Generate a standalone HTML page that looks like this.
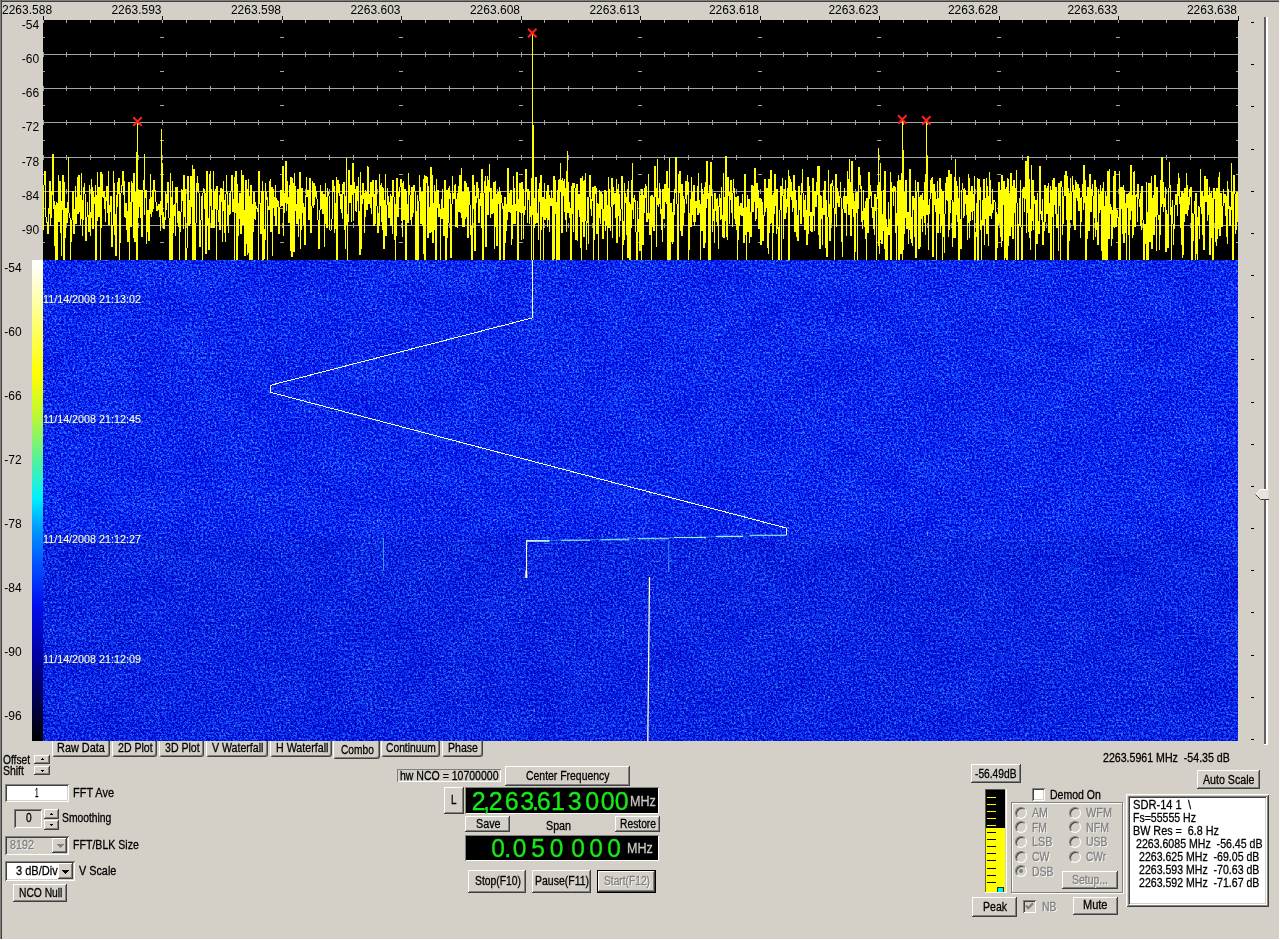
<!DOCTYPE html>
<html><head><meta charset="utf-8"><title>SpectraVue</title>
<style>
html,body{margin:0;padding:0}
body{width:1280px;height:940px;background:#d4d0c8;overflow:hidden;position:relative;font-family:"Liberation Sans",sans-serif;}
.t{position:absolute;white-space:pre;transform-origin:0 50%;display:block;-webkit-text-stroke:0.3px currentColor}
.btn{position:absolute;background:#d4d0c8;box-sizing:border-box;box-shadow:inset -1px -1px #404040,inset 1px 1px #fff,inset -2px -2px #808080,inset 2px 2px #d4d0c8}
.sunk{position:absolute;box-sizing:border-box;box-shadow:inset 1px 1px #808080,inset -1px -1px #fff,inset 2px 2px #404040,inset -2px -2px #d4d0c8}
.abs{position:absolute}
</style></head><body>
<div id="all" style="position:absolute;left:0;top:0;width:1280px;height:940px;will-change:transform">
<div class="abs" style="left:0;top:0;width:1280px;height:2px;background:#404040;border-top:1px solid #808080;box-sizing:border-box"></div>
<div class="abs" style="left:0;top:0;width:2px;height:940px;background:#404040;border-left:1px solid #808080;box-sizing:border-box"></div>
<div class="abs" style="left:0;top:939px;width:1280px;height:1px;background:#fff"></div>
<div class="abs" style="left:1279px;top:0;width:1px;height:940px;background:#fff"></div>
<style>
.tab{position:absolute;box-sizing:border-box;border-left:1px solid #fff;border-right:1px solid #404040;border-bottom:1px solid #404040;border-radius:0 0 3px 3px;box-shadow:inset -1px -1px #808080}
.sunk1{position:absolute;box-sizing:border-box;box-shadow:inset 1px 1px #808080,inset -1px -1px #fff}
.disp{position:absolute;box-sizing:border-box;box-shadow:inset 1px 1px #808080,inset -1px -1px #fff}
.ns{-webkit-text-stroke:0}
.dg{text-align:center;-webkit-text-stroke:0.35px currentColor}
.radio{width:12px;height:12px;border-radius:6px;box-sizing:border-box;background:#d4d0c8;border:1px solid;border-color:#808080 #fff #fff #808080;box-shadow:inset 1px 1px #404040}
</style>
<span class="t ns" style="left:2.00px;top:3.84px;font-size:12px;line-height:12px;color:#000;">2263.588</span>
<span class="t ns" style="left:111.45px;top:3.84px;font-size:12px;line-height:12px;color:#000;">2263.593</span>
<span class="t ns" style="left:230.95px;top:3.84px;font-size:12px;line-height:12px;color:#000;">2263.598</span>
<span class="t ns" style="left:350.45px;top:3.84px;font-size:12px;line-height:12px;color:#000;">2263.603</span>
<span class="t ns" style="left:469.95px;top:3.84px;font-size:12px;line-height:12px;color:#000;">2263.608</span>
<span class="t ns" style="left:589.45px;top:3.84px;font-size:12px;line-height:12px;color:#000;">2263.613</span>
<span class="t ns" style="left:708.95px;top:3.84px;font-size:12px;line-height:12px;color:#000;">2263.618</span>
<span class="t ns" style="left:828.45px;top:3.84px;font-size:12px;line-height:12px;color:#000;">2263.623</span>
<span class="t ns" style="left:947.95px;top:3.84px;font-size:12px;line-height:12px;color:#000;">2263.628</span>
<span class="t ns" style="left:1067.45px;top:3.84px;font-size:12px;line-height:12px;color:#000;">2263.633</span>
<span class="t ns" style="left:1186.95px;top:3.84px;font-size:12px;line-height:12px;color:#000;">2263.638</span>
<span class="t ns" style="left:21.86px;top:19.14px;font-size:12px;line-height:12px;color:#000;">-54</span>
<span class="t ns" style="left:21.86px;top:53.14px;font-size:12px;line-height:12px;color:#000;">-60</span>
<span class="t ns" style="left:21.86px;top:87.14px;font-size:12px;line-height:12px;color:#000;">-66</span>
<span class="t ns" style="left:21.86px;top:121.14px;font-size:12px;line-height:12px;color:#000;">-72</span>
<span class="t ns" style="left:21.86px;top:156.14px;font-size:12px;line-height:12px;color:#000;">-78</span>
<span class="t ns" style="left:21.86px;top:190.14px;font-size:12px;line-height:12px;color:#000;">-84</span>
<span class="t ns" style="left:21.86px;top:224.14px;font-size:12px;line-height:12px;color:#000;">-90</span>
<span class="t ns" style="left:4.30px;top:261.54px;font-size:12px;line-height:12px;color:#000;">-54</span>
<span class="t ns" style="left:4.30px;top:325.54px;font-size:12px;line-height:12px;color:#000;">-60</span>
<span class="t ns" style="left:4.30px;top:389.54px;font-size:12px;line-height:12px;color:#000;">-66</span>
<span class="t ns" style="left:4.30px;top:453.54px;font-size:12px;line-height:12px;color:#000;">-72</span>
<span class="t ns" style="left:4.30px;top:517.54px;font-size:12px;line-height:12px;color:#000;">-78</span>
<span class="t ns" style="left:4.30px;top:581.54px;font-size:12px;line-height:12px;color:#000;">-84</span>
<span class="t ns" style="left:4.30px;top:645.54px;font-size:12px;line-height:12px;color:#000;">-90</span>
<span class="t ns" style="left:4.30px;top:709.54px;font-size:12px;line-height:12px;color:#000;">-96</span>
<svg class="abs" style="left:0;top:0" width="1280" height="745" viewBox="0 0 1280 745" shape-rendering="crispEdges">
<defs>
<filter id="wf" x="0" y="0" width="100%" height="100%" color-interpolation-filters="sRGB">
<feTurbulence type="fractalNoise" baseFrequency="0.618 0.707" numOctaves="3" seed="7"/>
<feColorMatrix type="matrix" values="1 0 0 0 0  1 0 0 0 0  1 0 0 0 0  0 0 0 0 1" result="n1"/>
<feTurbulence type="fractalNoise" baseFrequency="0.437 0.389" numOctaves="2" seed="23"/>
<feColorMatrix type="matrix" values="1 0 0 0 0  1 0 0 0 0  1 0 0 0 0  0 0 0 0 1" result="n2"/>
<feComposite in="n1" in2="n2" operator="arithmetic" k1="0" k2="1.05" k3="0.8" k4="-0.445" result="n12"/>
<feTurbulence type="fractalNoise" baseFrequency="0.023 0.031" numOctaves="3" seed="5"/>
<feColorMatrix type="matrix" values="1 0 0 0 0  1 0 0 0 0  1 0 0 0 0  0 0 0 0 1" result="n3"/>
<feComposite in="n12" in2="n3" operator="arithmetic" k1="0" k2="1" k3="0.13" k4="-0.065" result="n"/>
<feComponentTransfer in="n">
<feFuncR type="table" tableValues="0 0 0 0 0.01 0.035 0.075 0.12 0.18 0.25 0.32"/>
<feFuncG type="table" tableValues="0 0 0 0.02 0.07 0.16 0.27 0.37 0.46 0.55 0.62"/>
<feFuncB type="table" tableValues="0.74 0.76 0.79 0.84 0.90 0.955 1 1 1 1 1"/>
</feComponentTransfer>
</filter>
<linearGradient id="cb" x1="0" y1="0" x2="0" y2="1">
<stop offset="0" stop-color="#ffffff"/>
<stop offset="0.03" stop-color="#ffffe8"/>
<stop offset="0.10" stop-color="#ffff98"/>
<stop offset="0.235" stop-color="#ffff00"/>
<stop offset="0.32" stop-color="#c0f830"/>
<stop offset="0.42" stop-color="#50f0a0"/>
<stop offset="0.495" stop-color="#00f0ff"/>
<stop offset="0.553" stop-color="#00a0ff"/>
<stop offset="0.634" stop-color="#0050ff"/>
<stop offset="0.715" stop-color="#0010f0"/>
<stop offset="0.823" stop-color="#0000a0"/>
<stop offset="0.931" stop-color="#000040"/>
<stop offset="1" stop-color="#000000"/>
</linearGradient>
<linearGradient id="dk" x1="0" y1="0" x2="0" y2="1">
<stop offset="0" stop-color="#000050" stop-opacity="0"/>
<stop offset="0.56" stop-color="#000050" stop-opacity="0"/>
<stop offset="0.59" stop-color="#000050" stop-opacity="0.08"/>
<stop offset="1" stop-color="#000050" stop-opacity="0.08"/>
</linearGradient>
</defs>
<rect x="43" y="16" width="1" height="5" fill="#000"/>
<rect x="162" y="16" width="1" height="5" fill="#000"/>
<rect x="282" y="16" width="1" height="5" fill="#000"/>
<rect x="401" y="16" width="1" height="5" fill="#000"/>
<rect x="521" y="16" width="1" height="5" fill="#000"/>
<rect x="640" y="16" width="1" height="5" fill="#000"/>
<rect x="760" y="16" width="1" height="5" fill="#000"/>
<rect x="879" y="16" width="1" height="5" fill="#000"/>
<rect x="999" y="16" width="1" height="5" fill="#000"/>
<rect x="1118" y="16" width="1" height="5" fill="#000"/>
<rect x="1238" y="16" width="1" height="5" fill="#000"/>
<rect x="43" y="20" width="1195" height="240" fill="#000"/>
<clipPath id="pc"><rect x="43" y="20" width="1195" height="240"/></clipPath>
<path clip-path="url(#pc)" d="M43 54.5H1238M43 88.5H1238M43 122.5H1238M43 157.5H1238M43 191.5H1238M43 225.5H1238M41 37.5h4M41 71.5h4M41 105.5h4M41 140.5h4M41 174.5h4M41 208.5h4M41 242.5h4M43.5 20v3M43.5 52v5M43.5 86v5M43.5 120v5M43.5 155v5M43.5 189v5M43.5 223v5M66.5 20v3M66.5 52v5M66.5 86v5M66.5 120v5M66.5 155v5M66.5 189v5M66.5 223v5M90.5 20v3M90.5 52v5M90.5 86v5M90.5 120v5M90.5 155v5M90.5 189v5M90.5 223v5M114.5 20v3M114.5 52v5M114.5 86v5M114.5 120v5M114.5 155v5M114.5 189v5M114.5 223v5M138.5 20v3M138.5 52v5M138.5 86v5M138.5 120v5M138.5 155v5M138.5 189v5M138.5 223v5M160 37.5h4M160 71.5h4M160 105.5h4M160 140.5h4M160 174.5h4M160 208.5h4M160 242.5h4M162.5 20v3M162.5 52v5M162.5 86v5M162.5 120v5M162.5 155v5M162.5 189v5M162.5 223v5M186.5 20v3M186.5 52v5M186.5 86v5M186.5 120v5M186.5 155v5M186.5 189v5M186.5 223v5M210.5 20v3M210.5 52v5M210.5 86v5M210.5 120v5M210.5 155v5M210.5 189v5M210.5 223v5M234.5 20v3M234.5 52v5M234.5 86v5M234.5 120v5M234.5 155v5M234.5 189v5M234.5 223v5M258.5 20v3M258.5 52v5M258.5 86v5M258.5 120v5M258.5 155v5M258.5 189v5M258.5 223v5M280 37.5h4M280 71.5h4M280 105.5h4M280 140.5h4M280 174.5h4M280 208.5h4M280 242.5h4M282.5 20v3M282.5 52v5M282.5 86v5M282.5 120v5M282.5 155v5M282.5 189v5M282.5 223v5M305.5 20v3M305.5 52v5M305.5 86v5M305.5 120v5M305.5 155v5M305.5 189v5M305.5 223v5M329.5 20v3M329.5 52v5M329.5 86v5M329.5 120v5M329.5 155v5M329.5 189v5M329.5 223v5M353.5 20v3M353.5 52v5M353.5 86v5M353.5 120v5M353.5 155v5M353.5 189v5M353.5 223v5M377.5 20v3M377.5 52v5M377.5 86v5M377.5 120v5M377.5 155v5M377.5 189v5M377.5 223v5M399 37.5h4M399 71.5h4M399 105.5h4M399 140.5h4M399 174.5h4M399 208.5h4M399 242.5h4M401.5 20v3M401.5 52v5M401.5 86v5M401.5 120v5M401.5 155v5M401.5 189v5M401.5 223v5M425.5 20v3M425.5 52v5M425.5 86v5M425.5 120v5M425.5 155v5M425.5 189v5M425.5 223v5M449.5 20v3M449.5 52v5M449.5 86v5M449.5 120v5M449.5 155v5M449.5 189v5M449.5 223v5M473.5 20v3M473.5 52v5M473.5 86v5M473.5 120v5M473.5 155v5M473.5 189v5M473.5 223v5M497.5 20v3M497.5 52v5M497.5 86v5M497.5 120v5M497.5 155v5M497.5 189v5M497.5 223v5M519 37.5h4M519 71.5h4M519 105.5h4M519 140.5h4M519 174.5h4M519 208.5h4M519 242.5h4M521.5 20v3M521.5 52v5M521.5 86v5M521.5 120v5M521.5 155v5M521.5 189v5M521.5 223v5M544.5 20v3M544.5 52v5M544.5 86v5M544.5 120v5M544.5 155v5M544.5 189v5M544.5 223v5M568.5 20v3M568.5 52v5M568.5 86v5M568.5 120v5M568.5 155v5M568.5 189v5M568.5 223v5M592.5 20v3M592.5 52v5M592.5 86v5M592.5 120v5M592.5 155v5M592.5 189v5M592.5 223v5M616.5 20v3M616.5 52v5M616.5 86v5M616.5 120v5M616.5 155v5M616.5 189v5M616.5 223v5M638 37.5h4M638 71.5h4M638 105.5h4M638 140.5h4M638 174.5h4M638 208.5h4M638 242.5h4M640.5 20v3M640.5 52v5M640.5 86v5M640.5 120v5M640.5 155v5M640.5 189v5M640.5 223v5M664.5 20v3M664.5 52v5M664.5 86v5M664.5 120v5M664.5 155v5M664.5 189v5M664.5 223v5M688.5 20v3M688.5 52v5M688.5 86v5M688.5 120v5M688.5 155v5M688.5 189v5M688.5 223v5M712.5 20v3M712.5 52v5M712.5 86v5M712.5 120v5M712.5 155v5M712.5 189v5M712.5 223v5M736.5 20v3M736.5 52v5M736.5 86v5M736.5 120v5M736.5 155v5M736.5 189v5M736.5 223v5M758 37.5h4M758 71.5h4M758 105.5h4M758 140.5h4M758 174.5h4M758 208.5h4M758 242.5h4M760.5 20v3M760.5 52v5M760.5 86v5M760.5 120v5M760.5 155v5M760.5 189v5M760.5 223v5M783.5 20v3M783.5 52v5M783.5 86v5M783.5 120v5M783.5 155v5M783.5 189v5M783.5 223v5M807.5 20v3M807.5 52v5M807.5 86v5M807.5 120v5M807.5 155v5M807.5 189v5M807.5 223v5M831.5 20v3M831.5 52v5M831.5 86v5M831.5 120v5M831.5 155v5M831.5 189v5M831.5 223v5M855.5 20v3M855.5 52v5M855.5 86v5M855.5 120v5M855.5 155v5M855.5 189v5M855.5 223v5M877 37.5h4M877 71.5h4M877 105.5h4M877 140.5h4M877 174.5h4M877 208.5h4M877 242.5h4M879.5 20v3M879.5 52v5M879.5 86v5M879.5 120v5M879.5 155v5M879.5 189v5M879.5 223v5M903.5 20v3M903.5 52v5M903.5 86v5M903.5 120v5M903.5 155v5M903.5 189v5M903.5 223v5M927.5 20v3M927.5 52v5M927.5 86v5M927.5 120v5M927.5 155v5M927.5 189v5M927.5 223v5M951.5 20v3M951.5 52v5M951.5 86v5M951.5 120v5M951.5 155v5M951.5 189v5M951.5 223v5M975.5 20v3M975.5 52v5M975.5 86v5M975.5 120v5M975.5 155v5M975.5 189v5M975.5 223v5M997 37.5h4M997 71.5h4M997 105.5h4M997 140.5h4M997 174.5h4M997 208.5h4M997 242.5h4M999.5 20v3M999.5 52v5M999.5 86v5M999.5 120v5M999.5 155v5M999.5 189v5M999.5 223v5M1022.5 20v3M1022.5 52v5M1022.5 86v5M1022.5 120v5M1022.5 155v5M1022.5 189v5M1022.5 223v5M1046.5 20v3M1046.5 52v5M1046.5 86v5M1046.5 120v5M1046.5 155v5M1046.5 189v5M1046.5 223v5M1070.5 20v3M1070.5 52v5M1070.5 86v5M1070.5 120v5M1070.5 155v5M1070.5 189v5M1070.5 223v5M1094.5 20v3M1094.5 52v5M1094.5 86v5M1094.5 120v5M1094.5 155v5M1094.5 189v5M1094.5 223v5M1116 37.5h4M1116 71.5h4M1116 105.5h4M1116 140.5h4M1116 174.5h4M1116 208.5h4M1116 242.5h4M1118.5 20v3M1118.5 52v5M1118.5 86v5M1118.5 120v5M1118.5 155v5M1118.5 189v5M1118.5 223v5M1142.5 20v3M1142.5 52v5M1142.5 86v5M1142.5 120v5M1142.5 155v5M1142.5 189v5M1142.5 223v5M1166.5 20v3M1166.5 52v5M1166.5 86v5M1166.5 120v5M1166.5 155v5M1166.5 189v5M1166.5 223v5M1190.5 20v3M1190.5 52v5M1190.5 86v5M1190.5 120v5M1190.5 155v5M1190.5 189v5M1190.5 223v5M1214.5 20v3M1214.5 52v5M1214.5 86v5M1214.5 120v5M1214.5 155v5M1214.5 189v5M1214.5 223v5M1236 37.5h4M1236 71.5h4M1236 105.5h4M1236 140.5h4M1236 174.5h4M1236 208.5h4M1236 242.5h4M1238.5 20v3M1238.5 52v5M1238.5 86v5M1238.5 120v5M1238.5 155v5M1238.5 189v5M1238.5 223v5" stroke="#a4a4a4" stroke-width="1" fill="none"/>
<path d="M43.5 185V230M44.5 171V185M45.5 171V217M46.5 217V223M47.5 222V234M48.5 208V234M49.5 181V214M50.5 181V226M51.5 191V218M52.5 154V195M53.5 154V209M54.5 201V246M55.5 205V260M56.5 202V260M57.5 203V260M58.5 175V222M59.5 181V222M60.5 181V233M61.5 201V256M62.5 175V210M63.5 175V260M64.5 182V260M65.5 208V238M66.5 208V223M67.5 202V223M68.5 157V213M69.5 213V218M70.5 218V260M71.5 220V242M72.5 191V220M73.5 191V234M74.5 209V234M75.5 186V224M76.5 197V224M77.5 177V214M78.5 175V214M79.5 175V212M80.5 195V225M81.5 173V219M82.5 200V236M83.5 187V220M84.5 183V194M85.5 194V241M86.5 217V241M87.5 202V217M88.5 215V232M89.5 185V232M90.5 212V236M91.5 179V218M92.5 187V229M93.5 191V229M94.5 197V204M95.5 185V260M96.5 195V260M97.5 172V221M98.5 187V217M99.5 187V217M100.5 172V260M101.5 172V228M102.5 174V197M103.5 191V198M104.5 191V209M105.5 197V222M106.5 186V201M107.5 186V213M108.5 171V225M109.5 205V225M110.5 196V212M111.5 196V247M112.5 225V247M113.5 171V226M114.5 183V235M115.5 214V256M116.5 195V256M117.5 182V207M118.5 178V194M119.5 178V260M120.5 193V243M121.5 185V193M122.5 171V186M123.5 171V195M124.5 181V217M125.5 203V218M126.5 203V230M127.5 211V242M128.5 182V242M129.5 182V260M130.5 202V227M131.5 181V227M132.5 183V202M133.5 173V238M134.5 173V242M135.5 192V242M136.5 192V260M137.5 122V260M138.5 190V218M139.5 190V207M140.5 190V218M141.5 190V237M142.5 190V237M143.5 180V190M144.5 154V215M145.5 190V198M146.5 190V244M147.5 210V232M148.5 210V241M149.5 199V241M150.5 174V214M151.5 197V217M152.5 190V212M153.5 180V209M154.5 180V191M155.5 190V202M156.5 202V211M157.5 206V211M158.5 204V210M159.5 204V217M160.5 201V231M161.5 129V215M162.5 196V223M163.5 212V229M164.5 217V229M165.5 192V220M166.5 194V210M167.5 182V203M168.5 182V218M169.5 218V260M170.5 173V260M171.5 197V260M172.5 181V260M173.5 205V233M174.5 204V216M175.5 187V236M176.5 187V203M177.5 187V223M178.5 211V227M179.5 211V260M180.5 212V232M181.5 189V212M182.5 190V201M183.5 175V229M184.5 175V217M185.5 189V260M186.5 248V260M187.5 176V248M188.5 176V226M189.5 200V226M190.5 176V224M191.5 176V207M192.5 165V260M193.5 169V260M194.5 169V260M195.5 223V260M196.5 183V223M197.5 176V191M198.5 183V193M199.5 193V247M200.5 220V247M201.5 196V220M202.5 193V260M203.5 188V193M204.5 189V209M205.5 193V254M206.5 171V254M207.5 171V226M208.5 218V250M209.5 174V250M210.5 171V206M211.5 189V228M212.5 210V228M213.5 171V228M214.5 191V228M215.5 189V209M216.5 186V260M217.5 186V210M218.5 210V222M219.5 195V230M220.5 188V230M221.5 188V202M222.5 189V242M223.5 181V211M224.5 200V233M225.5 194V242M226.5 175V194M227.5 192V226M228.5 205V233M229.5 193V215M230.5 191V214M231.5 175V191M232.5 175V212M233.5 199V212M234.5 177V260M235.5 171V213M236.5 171V260M237.5 184V260M238.5 203V236M239.5 193V219M240.5 193V234M241.5 170V234M242.5 175V225M243.5 175V225M244.5 210V256M245.5 180V256M246.5 180V244M247.5 189V255M248.5 179V253M249.5 196V260M250.5 185V260M251.5 185V260M252.5 204V260M253.5 192V232M254.5 192V219M255.5 202V220M256.5 206V209M257.5 208V212M258.5 171V260M259.5 171V204M260.5 203V234M261.5 191V234M262.5 181V260M263.5 191V260M264.5 229V259M265.5 183V240M266.5 192V200M267.5 197V260M268.5 206V210M269.5 181V210M270.5 179V232M271.5 187V232M272.5 187V256M273.5 189V208M274.5 197V216M275.5 185V226M276.5 198V226M277.5 200V207M278.5 201V234M279.5 207V234M280.5 190V207M281.5 190V206M282.5 166V206M283.5 166V236M284.5 193V213M285.5 161V203M286.5 161V211M287.5 181V204M288.5 197V223M289.5 185V223M290.5 177V251M291.5 177V257M292.5 178V257M293.5 183V252M294.5 173V252M295.5 186V211M296.5 204V224M297.5 189V224M298.5 189V237M299.5 172V219M300.5 172V249M301.5 188V230M302.5 188V213M303.5 203V225M304.5 207V245M305.5 195V245M306.5 177V197M307.5 190V197M308.5 190V220M309.5 178V220M310.5 178V233M311.5 206V233M312.5 181V206M313.5 183V208M314.5 183V205M315.5 186V197M316.5 191V199M317.5 199V220M318.5 220V249M319.5 210V249M320.5 185V210M321.5 191V209M322.5 191V214M323.5 194V214M324.5 194V247M325.5 183V224M326.5 197V228M327.5 188V228M328.5 192V196M329.5 196V230M330.5 230V231M331.5 219V230M332.5 180V219M333.5 180V192M334.5 186V233M335.5 203V229M336.5 177V260M337.5 180V260M338.5 180V193M339.5 184V196M340.5 194V209M341.5 194V213M342.5 184V219M343.5 182V194M344.5 182V230M345.5 196V249M346.5 158V225M347.5 214V260M348.5 170V222M349.5 170V203M350.5 185V203M351.5 185V222M352.5 163V195M353.5 163V221M354.5 182V193M355.5 189V211M356.5 186V212M357.5 186V201M358.5 177V226M359.5 211V255M360.5 172V255M361.5 195V249M362.5 183V204M363.5 183V199M364.5 193V233M365.5 190V217M366.5 192V210M367.5 166V210M368.5 167V204M369.5 194V204M370.5 182V208M371.5 182V214M372.5 180V197M373.5 180V226M374.5 194V226M375.5 180V224M376.5 180V206M377.5 206V233M378.5 213V233M379.5 174V226M380.5 185V206M381.5 183V222M382.5 187V230M383.5 188V249M384.5 200V249M385.5 174V236M386.5 205V236M387.5 188V205M388.5 196V218M389.5 202V218M390.5 194V226M391.5 196V226M392.5 180V234M393.5 180V197M394.5 197V240M395.5 204V260M396.5 178V236M397.5 178V217M398.5 192V217M399.5 187V197M400.5 179V187M401.5 179V221M402.5 183V237M403.5 181V220M404.5 189V220M405.5 189V260M406.5 191V260M407.5 204V223M408.5 173V223M409.5 185V195M410.5 195V220M411.5 187V225M412.5 187V217M413.5 185V213M414.5 185V191M415.5 191V260M416.5 211V260M417.5 195V260M418.5 201V260M419.5 175V201M420.5 187V224M421.5 192V224M422.5 192V226M423.5 179V254M424.5 175V260M425.5 176V260M426.5 176V183M427.5 177V238M428.5 186V238M429.5 207V233M430.5 167V233M431.5 167V232M432.5 175V243M433.5 203V243M434.5 185V230M435.5 192V260M436.5 179V260M437.5 190V208M438.5 190V217M439.5 204V217M440.5 209V260M441.5 199V219M442.5 189V219M443.5 208V236M444.5 180V236M445.5 180V260M446.5 190V260M447.5 190V238M448.5 188V223M449.5 186V199M450.5 193V258M451.5 204V258M452.5 176V204M453.5 193V199M454.5 185V199M455.5 184V227M456.5 199V227M457.5 193V228M458.5 186V212M459.5 175V212M460.5 175V213M461.5 168V218M462.5 192V227M463.5 192V227M464.5 181V227M465.5 181V219M466.5 183V217M467.5 187V238M468.5 187V238M469.5 192V205M470.5 205V235M471.5 226V260M472.5 175V260M473.5 175V209M474.5 185V251M475.5 196V251M476.5 182V203M477.5 182V198M478.5 188V223M479.5 199V223M480.5 193V206M481.5 169V228M482.5 169V260M483.5 193V260M484.5 181V193M485.5 176V247M486.5 186V247M487.5 176V215M488.5 180V215M489.5 164V192M490.5 188V218M491.5 188V214M492.5 199V214M493.5 182V213M494.5 182V249M495.5 181V227M496.5 194V246M497.5 192V246M498.5 192V204M499.5 187V260M500.5 191V260M501.5 195V203M502.5 203V209M503.5 206V260M504.5 197V260M505.5 197V243M506.5 204V231M507.5 168V220M508.5 168V212M509.5 193V212M510.5 190V213M511.5 190V245M512.5 205V239M513.5 176V224M514.5 188V224M515.5 204V224M516.5 172V211M517.5 172V260M518.5 199V260M519.5 183V212M520.5 183V213M521.5 182V240M522.5 182V213M523.5 189V239M524.5 206V215M525.5 169V210M526.5 169V192M527.5 189V223M528.5 189V200M529.5 191V224M530.5 206V217M531.5 185V217M532.5 33V215M533.5 188V228M534.5 198V228M535.5 177V224M536.5 177V223M537.5 213V223M538.5 189V240M539.5 183V202M540.5 175V260M541.5 175V230M542.5 197V217M543.5 197V260M544.5 183V220M545.5 199V220M546.5 191V218M547.5 185V227M548.5 185V220M549.5 195V232M550.5 198V206M551.5 190V206M552.5 198V260M553.5 176V260M554.5 176V259M555.5 180V214M556.5 202V260M557.5 190V260M558.5 180V260M559.5 179V260M560.5 163V192M561.5 180V233M562.5 178V233M563.5 181V196M564.5 179V212M565.5 188V220M566.5 171V232M567.5 151V213M568.5 182V213M569.5 202V218M570.5 208V260M571.5 186V260M572.5 183V214M573.5 183V232M574.5 183V188M575.5 188V240M576.5 184V240M577.5 184V241M578.5 194V210M579.5 194V217M580.5 178V248M581.5 178V260M582.5 176V222M583.5 181V237M584.5 180V237M585.5 173V221M586.5 221V250M587.5 197V223M588.5 197V244M589.5 175V197M590.5 175V209M591.5 199V216M592.5 187V201M593.5 187V260M594.5 186V240M595.5 186V194M596.5 188V234M597.5 203V234M598.5 204V260M599.5 190V218M600.5 192V224M601.5 192V209M602.5 194V239M603.5 209V239M604.5 190V221M605.5 190V231M606.5 191V226M607.5 205V260M608.5 177V228M609.5 189V228M610.5 207V231M611.5 178V207M612.5 178V238M613.5 187V205M614.5 193V204M615.5 193V218M616.5 179V243M617.5 189V243M618.5 184V216M619.5 194V237M620.5 209V221M621.5 176V209M622.5 176V260M623.5 221V245M624.5 183V240M625.5 193V203M626.5 197V235M627.5 189V258M628.5 181V258M629.5 202V260M630.5 204V260M631.5 180V228M632.5 163V210M633.5 198V219M634.5 195V202M635.5 200V232M636.5 232V260M637.5 201V260M638.5 219V232M639.5 191V251M640.5 195V251M641.5 189V260M642.5 189V245M643.5 195V245M644.5 188V213M645.5 184V198M646.5 186V222M647.5 213V222M648.5 174V219M649.5 213V235M650.5 196V235M651.5 195V260M652.5 195V227M653.5 197V231M654.5 166V231M655.5 166V197M656.5 188V247M657.5 159V205M658.5 198V207M659.5 183V204M660.5 189V214M661.5 209V230M662.5 189V242M663.5 189V219M664.5 184V219M665.5 184V202M666.5 171V204M667.5 171V260M668.5 188V260M669.5 158V260M670.5 203V260M671.5 203V242M672.5 212V244M673.5 199V242M674.5 189V215M675.5 157V193M676.5 157V204M677.5 204V260M678.5 174V260M679.5 171V193M680.5 171V231M681.5 184V236M682.5 184V236M683.5 196V225M684.5 199V213M685.5 181V199M686.5 181V204M687.5 175V195M688.5 182V260M689.5 213V250M690.5 199V227M691.5 177V227M692.5 192V215M693.5 185V222M694.5 185V226M695.5 201V222M696.5 201V208M697.5 186V215M698.5 173V215M699.5 200V213M700.5 204V260M701.5 183V231M702.5 189V231M703.5 194V248M704.5 187V248M705.5 182V243M706.5 161V208M707.5 161V199M708.5 193V260M709.5 185V260M710.5 162V260M711.5 162V196M712.5 194V232M713.5 209V221M714.5 193V243M715.5 193V211M716.5 199V222M717.5 198V226M718.5 206V249M719.5 194V207M720.5 198V220M721.5 187V219M722.5 215V237M723.5 173V238M724.5 197V238M725.5 156V221M726.5 156V237M727.5 177V240M728.5 177V196M729.5 192V224M730.5 180V200M731.5 180V213M732.5 193V227M733.5 179V193M734.5 188V219M735.5 197V224M736.5 197V230M737.5 196V260M738.5 196V240M739.5 206V226M740.5 203V215M741.5 203V216M742.5 194V216M743.5 208V243M744.5 174V243M745.5 174V235M746.5 207V260M747.5 195V232M748.5 199V232M749.5 199V243M750.5 212V237M751.5 185V237M752.5 185V212M753.5 186V212M754.5 168V202M755.5 168V221M756.5 183V219M757.5 183V208M758.5 190V229M759.5 198V229M760.5 198V245M761.5 199V245M762.5 202V241M763.5 215V241M764.5 179V216M765.5 179V212M766.5 188V208M767.5 188V248M768.5 179V254M769.5 179V233M770.5 170V224M771.5 170V223M772.5 195V260M773.5 193V233M774.5 174V214M775.5 174V206M776.5 189V234M777.5 189V229M778.5 227V260M779.5 210V260M780.5 186V210M781.5 186V260M782.5 178V196M783.5 195V239M784.5 189V219M785.5 180V219M786.5 199V213M787.5 188V207M788.5 170V260M789.5 176V260M790.5 179V197M791.5 182V200M792.5 191V212M793.5 175V208M794.5 175V232M795.5 190V232M796.5 200V237M797.5 215V241M798.5 186V241M799.5 186V210M800.5 195V224M801.5 183V224M802.5 169V193M803.5 193V217M804.5 200V230M805.5 195V230M806.5 210V245M807.5 177V245M808.5 177V234M809.5 186V216M810.5 212V231M811.5 212V232M812.5 178V232M813.5 178V216M814.5 191V231M815.5 191V207M816.5 182V207M817.5 166V195M818.5 166V235M819.5 166V249M820.5 195V249M821.5 196V219M822.5 208V245M823.5 190V215M824.5 181V215M825.5 181V248M826.5 200V257M827.5 217V257M828.5 170V217M829.5 204V241M830.5 184V241M831.5 183V223M832.5 180V186M833.5 186V208M834.5 208V260M835.5 174V214M836.5 174V227M837.5 188V203M838.5 192V207M839.5 196V207M840.5 182V198M841.5 198V242M842.5 209V257M843.5 196V209M844.5 188V213M845.5 196V213M846.5 196V236M847.5 171V204M848.5 179V215M849.5 159V215M850.5 182V236M851.5 161V236M852.5 161V209M853.5 193V217M854.5 201V260M855.5 193V252M856.5 192V213M857.5 192V260M858.5 167V209M859.5 167V185M860.5 175V189M861.5 186V222M862.5 211V229M863.5 190V220M864.5 208V227M865.5 201V239M866.5 198V260M867.5 198V233M868.5 172V233M869.5 172V199M870.5 185V196M871.5 192V208M872.5 207V218M873.5 207V229M874.5 194V235M875.5 194V211M876.5 197V260M877.5 185V199M878.5 148V246M879.5 182V254M880.5 163V240M881.5 191V244M882.5 214V244M883.5 190V231M884.5 171V249M885.5 171V260M886.5 219V260M887.5 227V260M888.5 202V235M889.5 219V235M890.5 172V260M891.5 182V260M892.5 188V192M893.5 186V206M894.5 186V191M895.5 187V233M896.5 213V260M897.5 181V226M898.5 175V260M899.5 180V260M900.5 180V254M901.5 173V254M902.5 120V260M903.5 201V250M904.5 192V234M905.5 180V218M906.5 180V229M907.5 212V229M908.5 212V244M909.5 169V230M910.5 169V239M911.5 217V243M912.5 196V246M913.5 196V210M914.5 198V237M915.5 180V258M916.5 192V258M917.5 182V192M918.5 182V249M919.5 197V249M920.5 195V247M921.5 195V219M922.5 193V232M923.5 200V216M924.5 182V223M925.5 174V235M926.5 121V215M927.5 185V206M928.5 205V250M929.5 199V214M930.5 180V199M931.5 178V193M932.5 177V257M933.5 184V257M934.5 184V205M935.5 192V212M936.5 199V260M937.5 181V233M938.5 198V233M939.5 178V214M940.5 178V233M941.5 189V226M942.5 191V260M943.5 191V237M944.5 214V253M945.5 183V214M946.5 177V200M947.5 177V201M948.5 170V237M949.5 170V230M950.5 174V213M951.5 174V200M952.5 200V247M953.5 202V238M954.5 177V238M955.5 159V238M956.5 181V215M957.5 186V222M958.5 198V260M959.5 177V260M960.5 219V249M961.5 190V249M962.5 183V190M963.5 189V218M964.5 188V216M965.5 190V204M966.5 195V215M967.5 195V240M968.5 174V223M969.5 178V238M970.5 191V221M971.5 186V212M972.5 186V220M973.5 194V211M974.5 176V260M975.5 232V260M976.5 203V237M977.5 178V260M978.5 179V260M979.5 179V200M980.5 187V230M981.5 220V260M982.5 200V225M983.5 179V225M984.5 179V245M985.5 198V219M986.5 178V234M987.5 186V234M988.5 196V246M989.5 172V216M990.5 180V216M991.5 204V219M992.5 189V213M993.5 200V210M994.5 200V202M995.5 202V260M996.5 212V260M997.5 214V248M998.5 182V225M999.5 182V223M1000.5 190V237M1001.5 175V247M1002.5 175V241M1003.5 181V205M1004.5 181V260M1005.5 189V258M1006.5 187V260M1007.5 178V260M1008.5 179V246M1009.5 193V236M1010.5 173V236M1011.5 173V227M1012.5 186V239M1013.5 180V239M1014.5 180V213M1015.5 188V260M1016.5 170V203M1017.5 203V260M1018.5 224V260M1019.5 198V226M1020.5 180V227M1021.5 227V260M1022.5 189V260M1023.5 187V198M1024.5 187V212M1025.5 161V199M1026.5 161V233M1027.5 156V213M1028.5 156V232M1029.5 179V238M1030.5 209V250M1031.5 165V231M1032.5 180V221M1033.5 180V230M1034.5 196V204M1035.5 200V260M1036.5 200V244M1037.5 193V244M1038.5 221V234M1039.5 166V234M1040.5 166V214M1041.5 211V220M1042.5 199V245M1043.5 222V245M1044.5 185V231M1045.5 185V222M1046.5 188V214M1047.5 186V214M1048.5 183V233M1049.5 203V233M1050.5 186V260M1051.5 190V260M1052.5 180V217M1053.5 178V260M1054.5 178V205M1055.5 187V214M1056.5 187V228M1057.5 214V228M1058.5 183V251M1059.5 183V206M1060.5 181V260M1061.5 181V187M1062.5 187V235M1063.5 196V224M1064.5 175V196M1065.5 171V196M1066.5 171V220M1067.5 176V260M1068.5 188V260M1069.5 193V241M1070.5 178V220M1071.5 192V220M1072.5 176V192M1073.5 185V225M1074.5 190V230M1075.5 180V230M1076.5 182V198M1077.5 184V201M1078.5 184V211M1079.5 188V211M1080.5 198V238M1081.5 197V222M1082.5 184V197M1083.5 165V210M1084.5 165V203M1085.5 180V260M1086.5 196V260M1087.5 187V239M1088.5 187V231M1089.5 174V231M1090.5 174V212M1091.5 189V212M1092.5 184V196M1093.5 196V240M1094.5 180V218M1095.5 180V237M1096.5 187V230M1097.5 222V245M1098.5 189V245M1099.5 194V213M1100.5 185V210M1101.5 191V251M1102.5 188V260M1103.5 182V260M1104.5 206V260M1105.5 192V260M1106.5 196V260M1107.5 171V260M1108.5 171V239M1109.5 169V239M1110.5 204V214M1111.5 207V246M1112.5 210V239M1113.5 176V227M1114.5 171V228M1115.5 171V227M1116.5 209V227M1117.5 210V218M1118.5 217V260M1119.5 171V260M1120.5 187V260M1121.5 187V209M1122.5 187V234M1123.5 185V243M1124.5 190V243M1125.5 203V233M1126.5 194V260M1127.5 194V208M1128.5 193V235M1129.5 192V260M1130.5 165V220M1131.5 165V211M1132.5 195V238M1133.5 172V235M1134.5 171V227M1135.5 195V227M1136.5 194V197M1137.5 184V222M1138.5 184V199M1139.5 199V207M1140.5 193V226M1141.5 186V230M1142.5 186V220M1143.5 220V260M1144.5 224V260M1145.5 224V244M1146.5 182V260M1147.5 212V260M1148.5 183V260M1149.5 183V242M1150.5 183V242M1151.5 176V249M1152.5 198V249M1153.5 195V235M1154.5 175V235M1155.5 175V217M1156.5 187V251M1157.5 187V215M1158.5 215V220M1159.5 215V250M1160.5 180V235M1161.5 157V207M1162.5 157V204M1163.5 182V212M1164.5 198V207M1165.5 187V252M1166.5 210V252M1167.5 214V248M1168.5 188V248M1169.5 162V188M1170.5 185V215M1171.5 207V260M1172.5 200V224M1173.5 224V245M1174.5 205V229M1175.5 194V205M1176.5 194V205M1177.5 184V216M1178.5 173V196M1179.5 178V204M1180.5 197V228M1181.5 191V245M1182.5 191V258M1183.5 193V255M1184.5 188V222M1185.5 188V214M1186.5 173V214M1187.5 185V216M1188.5 197V210M1189.5 189V205M1190.5 187V197M1191.5 187V260M1192.5 213V260M1193.5 214V241M1194.5 201V214M1195.5 193V260M1196.5 193V254M1197.5 217V260M1198.5 206V226M1199.5 207V239M1200.5 169V207M1201.5 191V214M1202.5 191V235M1203.5 196V250M1204.5 176V250M1205.5 176V202M1206.5 179V202M1207.5 179V221M1208.5 195V215M1209.5 187V255M1210.5 193V255M1211.5 191V238M1212.5 198V260M1213.5 188V260M1214.5 188V199M1215.5 191V242M1216.5 188V246M1217.5 188V239M1218.5 177V229M1219.5 172V236M1220.5 193V236M1221.5 193V227M1222.5 206V227M1223.5 189V206M1224.5 194V203M1225.5 194V216M1226.5 196V237M1227.5 181V244M1228.5 189V209M1229.5 206V226M1230.5 207V226M1231.5 163V210M1232.5 192V260M1233.5 175V260M1234.5 175V194M1235.5 194V234M1236.5 192V230M1237.5 192V222" stroke="#ffff00" stroke-width="1" fill="none"/>
<path d="M533.5 125V260M531.5 178V260M136.5 152V215M162.5 163V215M903.5 150V215M927.5 156V215" stroke="#ffff00" stroke-width="1"/>
<path d="M528.0999999999999 28.8L536.5 37.2M536.5 28.8L528.0999999999999 37.2" stroke="#ff2020" stroke-width="2" fill="none" shape-rendering="auto"/>
<path d="M133.3 117.3L141.7 125.7M141.7 117.3L133.3 125.7" stroke="#ff2020" stroke-width="2" fill="none" shape-rendering="auto"/>
<path d="M898.0999999999999 115.3L906.5 123.7M906.5 115.3L898.0999999999999 123.7" stroke="#ff2020" stroke-width="2" fill="none" shape-rendering="auto"/>
<path d="M922.0999999999999 116.3L930.5 124.7M930.5 116.3L922.0999999999999 124.7" stroke="#ff2020" stroke-width="2" fill="none" shape-rendering="auto"/>
<rect x="32" y="260" width="11" height="481" fill="url(#cb)"/>
<rect x="43" y="260" width="1195" height="481" fill="#0c40f0"/>
<rect x="43" y="260" width="1195" height="481" filter="url(#wf)"/>
<rect x="43" y="260" width="1195" height="481" fill="url(#dk)"/>
<g fill="none" shape-rendering="auto">
<path d="M532 260V318L270.5 385.3V392.3L786.3 528V535" stroke="#f6fff0" stroke-width="1" shape-rendering="crispEdges"/>
<path d="M786.5 535.2L526 541" stroke="#60d0ff" stroke-width="1" opacity="0.45"/>
<path d="M786.5 535.2H749.7M743 536.4H715.8M706 537.5H674M668.8 538.8H638M629.4 539.7H601M590 540.3H561.5M549.5 540.9H526" stroke="#90f4ff" stroke-width="1.1"/>
<path d="M549.5 540.9H526" stroke="#ffffe0" stroke-width="1.1"/>
<path d="M526.5 541V577" stroke="#ffffe0" stroke-width="1.1"/>
<path d="M526.3 571V578" stroke="#ffffe0" stroke-width="2"/>
<path d="M649.5 577L647.8 741" stroke="#ffffd8" stroke-width="1.3"/>
<path d="M668.8 541V572M383.5 538V570M927.5 531V536M643.2 528V535" stroke="#50c8ff" stroke-width="1" opacity="0.7"/>
</g>
</svg>
<span class="t" style="left:43.30px;top:293.63px;font-size:11px;line-height:11px;color:#ffffc8;transform:scaleX(0.9779);-webkit-text-stroke:0.1px #ffffc8">11/14/2008 21:13:02</span>
<span class="t" style="left:43.30px;top:413.63px;font-size:11px;line-height:11px;color:#ffffc8;transform:scaleX(0.9779);-webkit-text-stroke:0.1px #ffffc8">11/14/2008 21:12:45</span>
<span class="t" style="left:43.30px;top:533.63px;font-size:11px;line-height:11px;color:#ffffc8;transform:scaleX(0.9779);-webkit-text-stroke:0.1px #ffffc8">11/14/2008 21:12:27</span>
<span class="t" style="left:43.30px;top:653.63px;font-size:11px;line-height:11px;color:#ffffc8;transform:scaleX(0.9779);-webkit-text-stroke:0.1px #ffffc8">11/14/2008 21:12:09</span>
<svg class="abs" style="left:1240px;top:0" width="40" height="745" viewBox="1240 0 40 745" shape-rendering="crispEdges">
<rect x="1264" y="17" width="4" height="728" fill="#fff"/><rect x="1264" y="17" width="2" height="727" fill="#606060"/>
<rect x="1251" y="22" width="3" height="1" fill="#000"/>
<rect x="1251" y="64" width="3" height="1" fill="#000"/>
<rect x="1251" y="106" width="3" height="1" fill="#000"/>
<rect x="1251" y="149" width="3" height="1" fill="#000"/>
<rect x="1251" y="191" width="3" height="1" fill="#000"/>
<rect x="1251" y="233" width="3" height="1" fill="#000"/>
<rect x="1251" y="275" width="3" height="1" fill="#000"/>
<rect x="1251" y="317" width="3" height="1" fill="#000"/>
<rect x="1251" y="359" width="3" height="1" fill="#000"/>
<rect x="1251" y="402" width="3" height="1" fill="#000"/>
<rect x="1251" y="444" width="3" height="1" fill="#000"/>
<rect x="1251" y="486" width="3" height="1" fill="#000"/>
<rect x="1251" y="528" width="3" height="1" fill="#000"/>
<rect x="1251" y="570" width="3" height="1" fill="#000"/>
<rect x="1251" y="612" width="3" height="1" fill="#000"/>
<rect x="1251" y="655" width="3" height="1" fill="#000"/>
<rect x="1251" y="697" width="3" height="1" fill="#000"/>
<rect x="1251" y="739" width="3" height="1" fill="#000"/>
<path d="M1255.5 494.5L1260.5 489.5H1268.5V499.5H1260.5Z" fill="#e6e3dc" stroke="none" shape-rendering="auto"/>
<path d="M1255.5 494.5L1260.5 489.5H1268.5" fill="none" stroke="#fff" stroke-width="1" shape-rendering="auto"/>
<path d="M1255.5 494.5L1260.5 499.5H1269" fill="none" stroke="#404040" stroke-width="1" shape-rendering="auto"/>
</svg>
<div class="tab" style="left:52px;top:741px;width:58px;height:16px;"></div>
<span class="t" style="left:57.40px;top:742.09px;font-size:12.5px;line-height:12.5px;color:#000;transform:scaleX(0.8728);">Raw Data</span>
<div class="tab" style="left:112px;top:741px;width:45px;height:16px;"></div>
<span class="t" style="left:117.80px;top:742.09px;font-size:12.5px;line-height:12.5px;color:#000;transform:scaleX(0.8465);">2D Plot</span>
<div class="tab" style="left:159px;top:741px;width:45px;height:16px;"></div>
<span class="t" style="left:164.70px;top:742.09px;font-size:12.5px;line-height:12.5px;color:#000;transform:scaleX(0.8465);">3D Plot</span>
<div class="tab" style="left:206px;top:741px;width:62px;height:16px;"></div>
<span class="t" style="left:211.60px;top:742.09px;font-size:12.5px;line-height:12.5px;color:#000;transform:scaleX(0.8473);">V Waterfall</span>
<div class="tab" style="left:270px;top:741px;width:62px;height:16px;"></div>
<span class="t" style="left:276.00px;top:742.09px;font-size:12.5px;line-height:12.5px;color:#000;transform:scaleX(0.8541);">H Waterfall</span>
<div class="tab" style="left:381px;top:741px;width:59px;height:16px;"></div>
<span class="t" style="left:385.60px;top:742.09px;font-size:12.5px;line-height:12.5px;color:#000;transform:scaleX(0.8222);">Continuum</span>
<div class="tab" style="left:442px;top:741px;width:41px;height:16px;"></div>
<span class="t" style="left:447.50px;top:742.09px;font-size:12.5px;line-height:12.5px;color:#000;transform:scaleX(0.8464);">Phase</span>
<div class="tab" style="left:333px;top:741px;width:47px;height:18px;background:#d4d0c8"></div>
<span class="t" style="left:340.60px;top:744.19px;font-size:12.5px;line-height:12.5px;color:#000;transform:scaleX(0.8140);">Combo</span>
<span class="t" style="left:2.60px;top:753.69px;font-size:12.5px;line-height:12.5px;color:#000;transform:scaleX(0.8183);">Offset</span>
<span class="t" style="left:2.60px;top:764.69px;font-size:12.5px;line-height:12.5px;color:#000;transform:scaleX(0.8356);">Shift</span>
<div class="btn" style="left:34px;top:755px;width:16px;height:9px;"></div>
<div class="abs" style="left:40.5px;top:759px;width:3px;height:1px;background:#000"></div><div class="abs" style="left:41.5px;top:758px;width:1px;height:1px;background:#000"></div>
<div class="btn" style="left:34px;top:766px;width:16px;height:9px;"></div>
<div class="abs" style="left:40.5px;top:769.5px;width:3px;height:1px;background:#000"></div><div class="abs" style="left:41.5px;top:770.5px;width:1px;height:1px;background:#000"></div>
<div class="sunk" style="left:5px;top:784px;width:64px;height:18px;background:#fff"></div>
<span class="t" style="left:34.50px;top:787.19px;font-size:12.5px;line-height:12.5px;color:#000;transform:scaleX(0.5035);">1</span>
<span class="t" style="left:73.40px;top:787.29px;font-size:12.5px;line-height:12.5px;color:#000;transform:scaleX(0.8765);">FFT Ave</span>
<div class="sunk" style="left:14px;top:809px;width:28px;height:19px;background:#d4d0c8"></div>
<span class="t" style="left:25.50px;top:812.29px;font-size:12.5px;line-height:12.5px;color:#000;transform:scaleX(0.8199);">0</span>
<div class="btn" style="left:43.5px;top:809px;width:15px;height:10px;"></div>
<div class="abs" style="left:49.5px;top:813.5px;width:3px;height:1px;background:#000"></div><div class="abs" style="left:50.5px;top:812.5px;width:1px;height:1px;background:#000"></div>
<div class="btn" style="left:43.5px;top:820px;width:15px;height:10px;"></div>
<div class="abs" style="left:49.5px;top:824px;width:3px;height:1px;background:#000"></div><div class="abs" style="left:50.5px;top:825px;width:1px;height:1px;background:#000"></div>
<span class="t" style="left:61.70px;top:812.09px;font-size:12.5px;line-height:12.5px;color:#000;transform:scaleX(0.8250);">Smoothing</span>
<div class="sunk" style="left:5px;top:836px;width:64px;height:19px;background:#d4d0c8"></div>
<span class="t" style="left:9.60px;top:839.39px;font-size:12.5px;line-height:12.5px;color:#808080;transform:scaleX(0.8595);text-shadow:1px 1px #fff">8192</span>
<div class="btn" style="left:52px;top:838px;width:15px;height:15px;"></div>
<div class="abs" style="left:56.5px;top:844px;width:7px;height:1px;background:#808080"></div><div class="abs" style="left:57.5px;top:845px;width:5px;height:1px;background:#808080"></div><div class="abs" style="left:58.5px;top:846px;width:3px;height:1px;background:#808080"></div><div class="abs" style="left:59.5px;top:847px;width:1px;height:1px;background:#808080"></div>
<span class="t" style="left:73.40px;top:838.89px;font-size:12.5px;line-height:12.5px;color:#000;transform:scaleX(0.8471);">FFT/BLK Size</span>
<div class="sunk" style="left:5px;top:861px;width:70px;height:20px;background:#fff"></div>
<span class="t" style="left:15.70px;top:865.19px;font-size:12.5px;line-height:12.5px;color:#000;transform:scaleX(0.8848);clip-path:inset(0 0 0 0)">3 dB/Div</span>
<div class="btn" style="left:58px;top:863px;width:15px;height:16px;"></div>
<div class="abs" style="left:62px;top:869.5px;width:7px;height:1px;background:#000"></div><div class="abs" style="left:63px;top:870.5px;width:5px;height:1px;background:#000"></div><div class="abs" style="left:64px;top:871.5px;width:3px;height:1px;background:#000"></div><div class="abs" style="left:65px;top:872.5px;width:1px;height:1px;background:#000"></div>
<span class="t" style="left:79.00px;top:864.89px;font-size:12.5px;line-height:12.5px;color:#000;transform:scaleX(0.8659);">V Scale</span>
<div class="btn" style="left:13px;top:884px;width:54px;height:18px;"></div>
<span class="t" style="left:18.60px;top:886.89px;font-size:12.5px;line-height:12.5px;color:#000;transform:scaleX(0.8222);">NCO Null</span>
<div class="sunk1" style="left:397px;top:769px;width:104px;height:13px;"></div>
<span class="t" style="left:400.00px;top:769.69px;font-size:12.5px;line-height:12.5px;color:#000;transform:scaleX(0.8412);">hw NCO = 10700000</span>
<div class="btn" style="left:505px;top:766px;width:125px;height:20px;"></div>
<span class="t" style="left:525.50px;top:770.29px;font-size:12.5px;line-height:12.5px;color:#000;transform:scaleX(0.8346);">Center Frequency</span>
<div class="btn" style="left:444px;top:787px;width:20px;height:27px;"></div>
<span class="t" style="left:450.50px;top:794.39px;font-size:12.5px;line-height:12.5px;color:#000;transform:scaleX(0.7912);">L</span>
<div class="disp" style="left:465px;top:787px;width:194px;height:27px;background:#000"></div>
<span class="t dg" style="left:463.60px;top:788.79px;width:30px;font-size:25px;line-height:25px;color:#18e818;transform:scaleY(1.05);transform-origin:50% 48.85%">2</span>
<span class="t dg" style="left:480.60px;top:788.79px;width:30px;font-size:25px;line-height:25px;color:#18e818;transform:scaleY(1.05);transform-origin:50% 48.85%">2</span>
<span class="t dg" style="left:496.60px;top:788.79px;width:30px;font-size:25px;line-height:25px;color:#18e818;transform:scaleY(1.05);transform-origin:50% 48.85%">6</span>
<span class="t dg" style="left:512.30px;top:788.79px;width:30px;font-size:25px;line-height:25px;color:#18e818;transform:scaleY(1.05);transform-origin:50% 48.85%">3</span>
<span class="t dg" style="left:528.70px;top:788.79px;width:30px;font-size:25px;line-height:25px;color:#18e818;transform:scaleY(1.05);transform-origin:50% 48.85%">6</span>
<span class="t dg" style="left:543.00px;top:788.79px;width:30px;font-size:25px;line-height:25px;color:#18e818;transform:scaleY(1.05);transform-origin:50% 48.85%">1</span>
<span class="t dg" style="left:559.60px;top:788.79px;width:30px;font-size:25px;line-height:25px;color:#18e818;transform:scaleY(1.05);transform-origin:50% 48.85%">3</span>
<span class="t dg" style="left:577.20px;top:788.79px;width:30px;font-size:25px;line-height:25px;color:#18e818;transform:scaleY(1.05);transform-origin:50% 48.85%">0</span>
<span class="t dg" style="left:592.70px;top:788.79px;width:30px;font-size:25px;line-height:25px;color:#18e818;transform:scaleY(1.05);transform-origin:50% 48.85%">0</span>
<span class="t dg" style="left:606.60px;top:788.79px;width:30px;font-size:25px;line-height:25px;color:#18e818;transform:scaleY(1.05);transform-origin:50% 48.85%">0</span>
<span class="t dg" style="left:471.60px;top:788.79px;width:30px;font-size:25px;line-height:25px;color:#18e818;transform:scaleY(1.05);transform-origin:50% 48.85%">,</span>
<span class="t dg" style="left:520.60px;top:788.79px;width:30px;font-size:25px;line-height:25px;color:#18e818;transform:scaleY(1.05);transform-origin:50% 48.85%">.</span>
<span class="t" style="left:629.60px;top:793.86px;font-size:14px;line-height:14px;color:#c8c8c8;transform:scaleX(0.8967);">MHz</span>
<div class="btn" style="left:465px;top:816px;width:45px;height:16px;"></div>
<span class="t" style="left:475.50px;top:818.29px;font-size:12.5px;line-height:12.5px;color:#000;transform:scaleX(0.8599);">Save</span>
<span class="t" style="left:546.00px;top:820.19px;font-size:12.5px;line-height:12.5px;color:#000;transform:scaleX(0.8564);">Span</span>
<div class="btn" style="left:615px;top:816px;width:45px;height:16px;"></div>
<span class="t" style="left:620.00px;top:818.29px;font-size:12.5px;line-height:12.5px;color:#000;transform:scaleX(0.8225);">Restore</span>
<div class="disp" style="left:465px;top:835px;width:194px;height:26px;background:#000"></div>
<span class="t dg" style="left:483.00px;top:835.83px;width:30px;font-size:24.5px;line-height:24.5px;color:#18e818;transform:scaleY(1.07);transform-origin:50% 48.85%">0</span>
<span class="t dg" style="left:504.70px;top:835.83px;width:30px;font-size:24.5px;line-height:24.5px;color:#18e818;transform:scaleY(1.07);transform-origin:50% 48.85%">0</span>
<span class="t dg" style="left:523.20px;top:835.83px;width:30px;font-size:24.5px;line-height:24.5px;color:#18e818;transform:scaleY(1.07);transform-origin:50% 48.85%">5</span>
<span class="t dg" style="left:541.50px;top:835.83px;width:30px;font-size:24.5px;line-height:24.5px;color:#18e818;transform:scaleY(1.07);transform-origin:50% 48.85%">0</span>
<span class="t dg" style="left:563.10px;top:835.83px;width:30px;font-size:24.5px;line-height:24.5px;color:#18e818;transform:scaleY(1.07);transform-origin:50% 48.85%">0</span>
<span class="t dg" style="left:581.00px;top:835.83px;width:30px;font-size:24.5px;line-height:24.5px;color:#18e818;transform:scaleY(1.07);transform-origin:50% 48.85%">0</span>
<span class="t dg" style="left:599.10px;top:835.83px;width:30px;font-size:24.5px;line-height:24.5px;color:#18e818;transform:scaleY(1.07);transform-origin:50% 48.85%">0</span>
<span class="t dg" style="left:492.60px;top:835.83px;width:30px;font-size:24.5px;line-height:24.5px;color:#18e818;transform:scaleY(1.07);transform-origin:50% 48.85%">.</span>
<span class="t" style="left:626.50px;top:840.96px;font-size:14px;line-height:14px;color:#c8c8c8;transform:scaleX(0.8967);">MHz</span>
<div class="btn" style="left:468px;top:870px;width:58px;height:23px;"></div>
<span class="t" style="left:474.50px;top:875.19px;font-size:12.5px;line-height:12.5px;color:#000;transform:scaleX(0.8277);">Stop(F10)</span>
<div class="btn" style="left:532px;top:870px;width:59px;height:23px;"></div>
<span class="t" style="left:534.50px;top:875.19px;font-size:12.5px;line-height:12.5px;color:#000;transform:scaleX(0.8388);">Pause(F11)</span>
<div class="abs" style="left:597px;top:870px;width:59px;height:23px;background:#000"></div>
<div class="btn" style="left:598px;top:871px;width:57px;height:21px;"></div>
<span class="t" style="left:603.50px;top:875.19px;font-size:12.5px;line-height:12.5px;color:#808080;transform:scaleX(0.8176);text-shadow:1px 1px #fff">Start(F12)</span>
<span class="t" style="left:1103.40px;top:751.89px;font-size:12.5px;line-height:12.5px;color:#000;transform:scaleX(0.8487);">2263.5961 MHz  -54.35 dB</span>
<div class="btn" style="left:971px;top:764px;width:50px;height:19px;"></div>
<span class="t" style="left:974.80px;top:767.89px;font-size:12.5px;line-height:12.5px;color:#000;transform:scaleX(0.8180);">-56.49dB</span>
<div class="btn" style="left:1197px;top:770px;width:63px;height:19px;"></div>
<span class="t" style="left:1202.50px;top:774.29px;font-size:12.5px;line-height:12.5px;color:#000;transform:scaleX(0.8519);">Auto Scale</span>
<svg class="abs" style="left:984px;top:788px" width="24" height="106" viewBox="984 788 24 106" shape-rendering="crispEdges">
<rect x="985" y="789" width="22" height="104" fill="#fff"/><rect x="985" y="789" width="21" height="103" fill="#d4d0c8"/><rect x="985" y="789" width="20" height="103" fill="#555548"/>
<rect x="986" y="790" width="19" height="38" fill="#000"/><rect x="986" y="828" width="19" height="64" fill="#ffff00"/>
<rect x="985" y="828" width="1" height="64" fill="#6a6a20"/>
<rect x="987" y="797" width="9" height="1" fill="#ffff00"/>
<rect x="987" y="804" width="9" height="1" fill="#ffff00"/>
<rect x="987" y="811" width="9" height="1" fill="#ffff00"/>
<rect x="987" y="818" width="9" height="1" fill="#ffff00"/>
<rect x="987" y="825" width="9" height="1" fill="#ffff00"/>
<rect x="987" y="832" width="9" height="1" fill="#000"/>
<rect x="987" y="839" width="9" height="1" fill="#000"/>
<rect x="987" y="846" width="9" height="1" fill="#000"/>
<rect x="987" y="853" width="9" height="1" fill="#000"/>
<rect x="987" y="860" width="9" height="1" fill="#000"/>
<rect x="987" y="868" width="9" height="1" fill="#000"/>
<rect x="987" y="875" width="9" height="1" fill="#000"/>
<rect x="987" y="882" width="9" height="1" fill="#000"/>
<rect x="997" y="887" width="7" height="5" fill="#203030"/><rect x="998" y="888" width="5" height="4" fill="#00f0f0"/>
</svg>
<div class="sunk" style="left:1032px;top:788px;width:13px;height:13px;background:#fff"></div>
<span class="t" style="left:1050.20px;top:789.09px;font-size:12.5px;line-height:12.5px;color:#000;transform:scaleX(0.8405);">Demod On</span>
<div class="abs" style="left:1011px;top:802px;width:112px;height:91px;box-sizing:border-box;border:1px solid #808080;box-shadow:1px 1px #fff, inset 1px 1px #fff"></div>
<div class="abs radio" style="left:1014.5px;top:806.5px"></div>
<span class="t" style="left:1031.80px;top:806.89px;font-size:12.5px;line-height:12.5px;color:#808080;transform:scaleX(0.8533);text-shadow:1px 1px #fff">AM</span>
<div class="abs radio" style="left:1014.5px;top:821.3px"></div>
<span class="t" style="left:1031.80px;top:821.69px;font-size:12.5px;line-height:12.5px;color:#808080;transform:scaleX(0.8311);text-shadow:1px 1px #fff">FM</span>
<div class="abs radio" style="left:1014.5px;top:836px"></div>
<span class="t" style="left:1031.80px;top:836.39px;font-size:12.5px;line-height:12.5px;color:#808080;transform:scaleX(0.8677);text-shadow:1px 1px #fff">LSB</span>
<div class="abs radio" style="left:1014.5px;top:850.7px"></div>
<span class="t" style="left:1031.80px;top:851.09px;font-size:12.5px;line-height:12.5px;color:#808080;transform:scaleX(0.8403);text-shadow:1px 1px #fff">CW</span>
<div class="abs radio" style="left:1014.5px;top:865.4px"></div>
<div class="abs" style="left:1018.5px;top:869.4px;width:4px;height:4px;border-radius:2px;background:#808080"></div>
<span class="t" style="left:1031.80px;top:865.79px;font-size:12.5px;line-height:12.5px;color:#808080;transform:scaleX(0.8365);text-shadow:1px 1px #fff">DSB</span>
<div class="abs radio" style="left:1068.8px;top:806.5px"></div>
<span class="t" style="left:1086.00px;top:806.89px;font-size:12.5px;line-height:12.5px;color:#808080;transform:scaleX(0.8711);text-shadow:1px 1px #fff">WFM</span>
<div class="abs radio" style="left:1068.8px;top:821.3px"></div>
<span class="t" style="left:1086.00px;top:821.69px;font-size:12.5px;line-height:12.5px;color:#808080;transform:scaleX(0.8495);text-shadow:1px 1px #fff">NFM</span>
<div class="abs radio" style="left:1068.8px;top:836px"></div>
<span class="t" style="left:1086.00px;top:836.39px;font-size:12.5px;line-height:12.5px;color:#808080;transform:scaleX(0.8365);text-shadow:1px 1px #fff">USB</span>
<div class="abs radio" style="left:1068.8px;top:850.7px"></div>
<span class="t" style="left:1086.00px;top:851.09px;font-size:12.5px;line-height:12.5px;color:#808080;transform:scaleX(0.8077);text-shadow:1px 1px #fff">CWr</span>
<div class="btn" style="left:1062px;top:871px;width:56px;height:18px;"></div>
<span class="t" style="left:1071.50px;top:873.89px;font-size:12.5px;line-height:12.5px;color:#808080;transform:scaleX(0.8356);text-shadow:1px 1px #fff">Setup...</span>
<div class="btn" style="left:972px;top:897px;width:45px;height:20px;"></div>
<span class="t" style="left:982.50px;top:901.39px;font-size:12.5px;line-height:12.5px;color:#000;transform:scaleX(0.8424);">Peak</span>
<div class="sunk" style="left:1023px;top:900px;width:13px;height:13px;background:#d4d0c8"></div>
<svg class="abs" style="left:1025px;top:902px" width="9" height="9" viewBox="0 0 9 9"><path d="M1 3.6L3.3 6.2L8 1.3" stroke="#808080" stroke-width="2.2" fill="none"/></svg>
<span class="t" style="left:1041.50px;top:900.69px;font-size:12.5px;line-height:12.5px;color:#808080;transform:scaleX(0.8350);text-shadow:1px 1px #fff">NB</span>
<div class="btn" style="left:1073px;top:897px;width:45px;height:18px;"></div>
<span class="t" style="left:1082.50px;top:899.19px;font-size:12.5px;line-height:12.5px;color:#000;transform:scaleX(0.8816);">Mute</span>
<div class="abs" style="left:1126px;top:794px;width:143px;height:113px;box-sizing:border-box;background:#fff;box-shadow:inset 1px 1px #fff,inset -1px -1px #404040,inset 2px 2px #d4d0c8,inset -2px -2px #808080,inset 3px 3px #808080,inset -3px -3px #fff,inset 4px 4px #404040,inset -4px -4px #d4d0c8"></div>
<span class="t" style="left:1132.50px;top:799.29px;font-size:12.5px;line-height:12.5px;color:#000;transform:scaleX(0.8882);">SDR-14 1  \</span>
<span class="t" style="left:1132.50px;top:812.29px;font-size:12.5px;line-height:12.5px;color:#000;transform:scaleX(0.8434);">Fs=55555 Hz</span>
<span class="t" style="left:1132.50px;top:825.29px;font-size:12.5px;line-height:12.5px;color:#000;transform:scaleX(0.8627);">BW Res =  6.8 Hz</span>
<span class="t" style="left:1135.60px;top:838.29px;font-size:12.5px;line-height:12.5px;color:#000;transform:scaleX(0.8467);">2263.6085 MHz  -56.45 dB</span>
<span class="t" style="left:1138.60px;top:851.29px;font-size:12.5px;line-height:12.5px;color:#000;transform:scaleX(0.8452);">2263.625 MHz  -69.05 dB</span>
<span class="t" style="left:1138.60px;top:864.29px;font-size:12.5px;line-height:12.5px;color:#000;transform:scaleX(0.8452);">2263.593 MHz  -70.63 dB</span>
<span class="t" style="left:1138.60px;top:877.29px;font-size:12.5px;line-height:12.5px;color:#000;transform:scaleX(0.8452);">2263.592 MHz  -71.67 dB</span>
</div></body></html>
